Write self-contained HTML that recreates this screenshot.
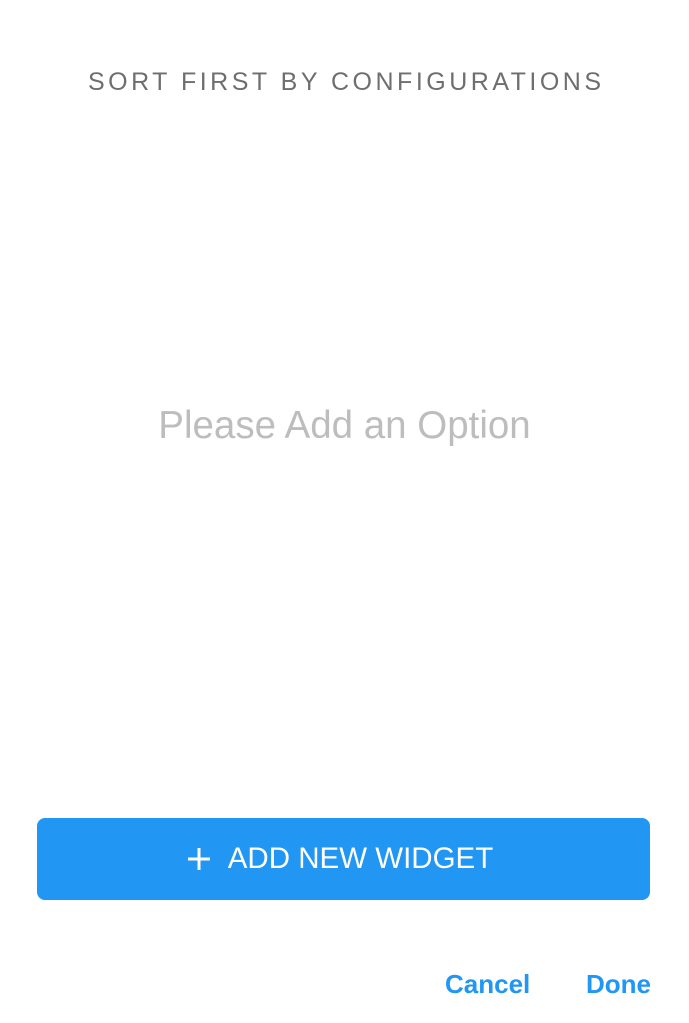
<!DOCTYPE html>
<html><head><style>
html,body{margin:0;padding:0;background:#fff;width:689px;height:1023px;overflow:hidden;font-family:"Liberation Sans",sans-serif;}
.t{position:absolute;left:0;width:689px;top:68px;text-align:center;font-size:25px;letter-spacing:3.5px;text-indent:3.5px;color:#6e6e6e;}
.p{position:absolute;left:0;width:689px;top:404px;text-align:center;font-size:38.5px;color:#bdbdbd;}
.b{position:absolute;left:37px;top:818px;width:613px;height:82px;background:#2196f3;border-radius:8px;color:#fff;font-size:29.5px;display:flex;align-items:center;justify-content:center;}
.c{position:absolute;top:969px;font-size:26px;font-weight:bold;color:#2196f3;}
</style></head><body>
<div class="t">SORT FIRST BY CONFIGURATIONS</div>
<div class="p">Please Add an Option</div>
<div class="b"><svg width="22" height="22" viewBox="0 0 22 22" style="margin-right:18px;margin-left:-6px"><path d="M11 0V22M0 11H22" stroke="#fff" stroke-width="3"/></svg>ADD NEW WIDGET</div>
<div class="c" style="left:445px">Cancel</div>
<div class="c" style="left:586px">Done</div>
</body></html>
